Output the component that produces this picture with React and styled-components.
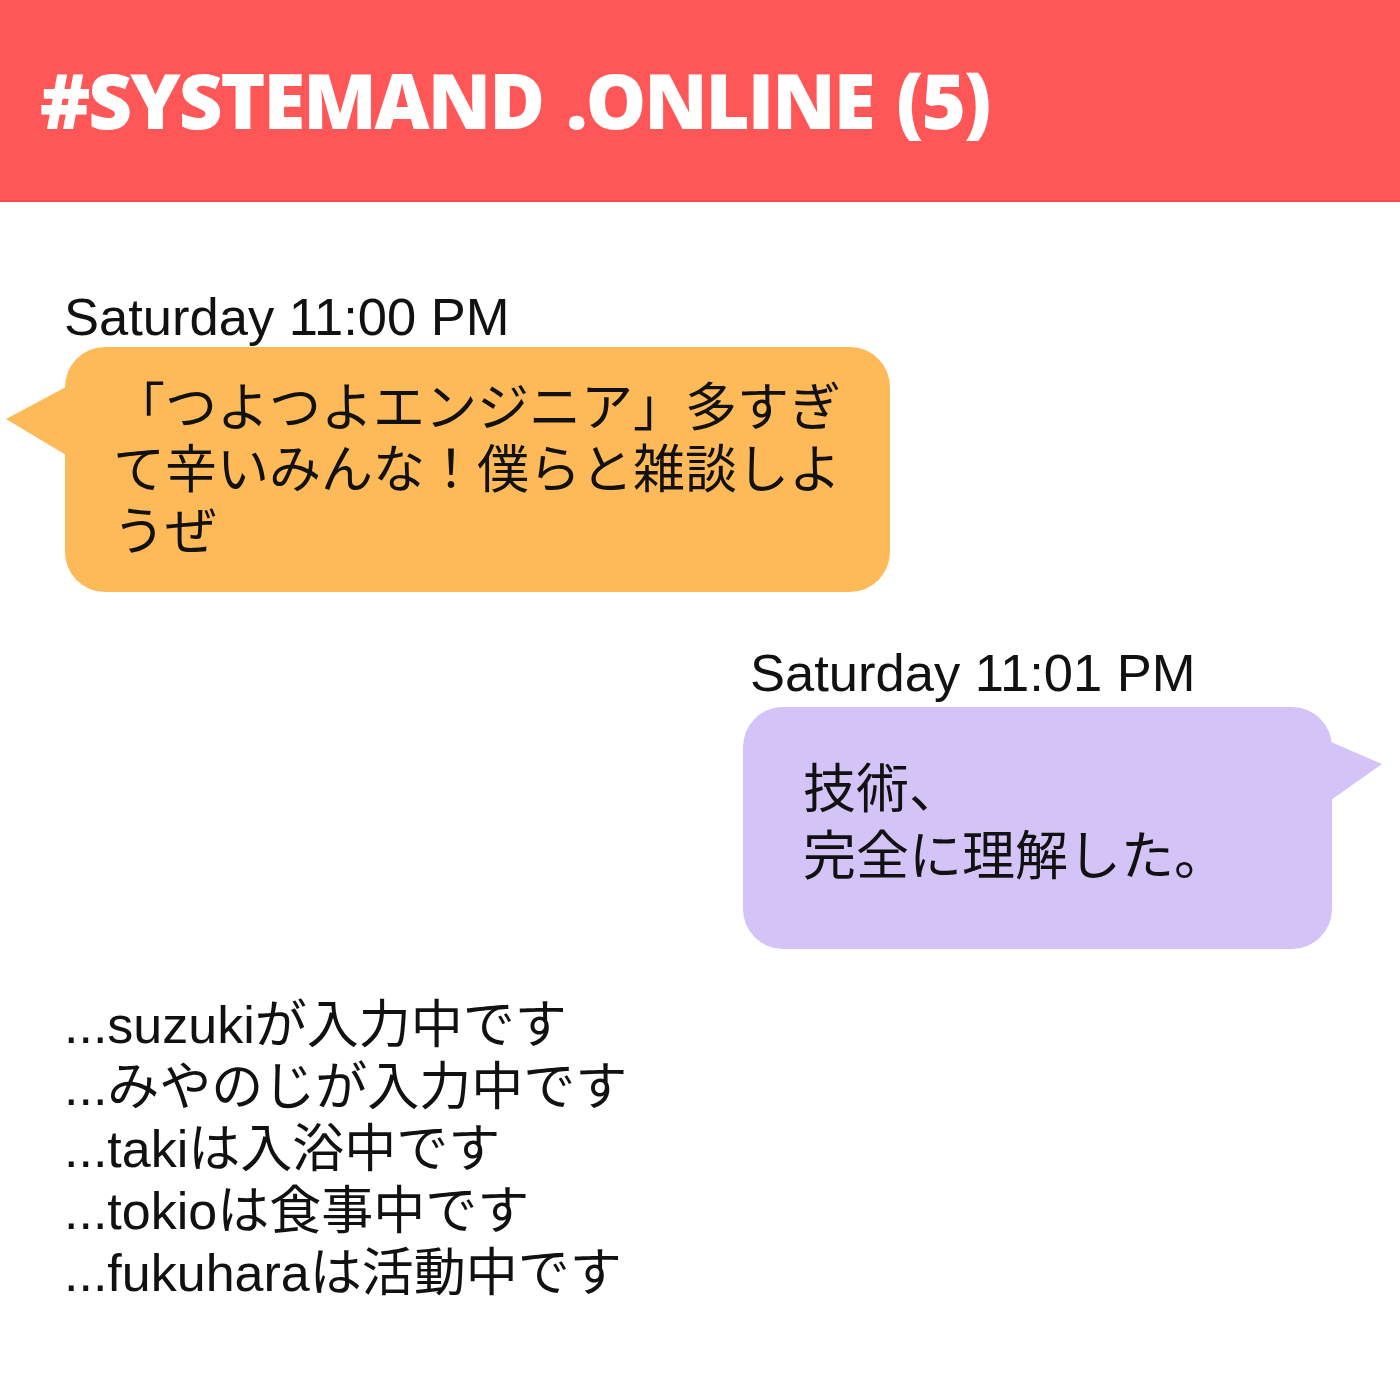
import React from "react";
import styled, { createGlobalStyle } from "styled-components";

const GlobalStyle = createGlobalStyle`
  html, body { margin: 0; padding: 0; background: #ffffff; }
  body { font-family: "Liberation Sans", "Noto Sans CJK JP", sans-serif; }
`;

const Page = styled.div`
  width: 1400px;
  min-height: 1400px;
  background: #ffffff;
  display: flex;
  flex-direction: column;
`;

const Header = styled.header`
  height: 200px;
  background: #ff5757;
  border-bottom: 2px solid #f84a4a;
  display: flex;
  align-items: center;
  padding-left: 40px;
`;

const Title = styled.h1`
  margin: 0;
  font-family: "Open Sans", "Liberation Sans", sans-serif;
  font-weight: 800;
  font-size: 76px;
  line-height: 1;
  color: #ffffff;
  letter-spacing: -2px;
  word-spacing: 5px;
  white-space: nowrap;
`;

const Chat = styled.main`
  display: flex;
  flex-direction: column;
  padding: 89px 68px 0 64px;
`;

const Message = styled.section`
  display: flex;
  flex-direction: column;
  align-self: ${(p) => (p.$mine ? "flex-end" : "flex-start")};
  margin-top: ${(p) => p.$top}px;
`;

const Stamp = styled.div`
  font-family: "Liberation Sans", Arial, sans-serif;
  font-size: 52.5px;
  line-height: 52px;
  color: #111111;
  margin-left: ${(p) => p.$indent}px;
  white-space: nowrap;
`;

const Bubble = styled.div`
  position: relative;
  box-sizing: border-box;
  width: ${(p) => p.$w}px;
  height: ${(p) => p.$h}px;
  margin-top: ${(p) => p.$gap}px;
  margin-left: ${(p) => p.$shift}px;
  padding: ${(p) => p.$pad};
  background: ${(p) => p.$bg};
  border-radius: 40px;
  font-family: "Noto Sans CJK JP", "Liberation Sans", sans-serif;
  font-size: ${(p) => p.$fs}px;
  line-height: ${(p) => p.$lh}px;
  color: #111111;
  white-space: nowrap;

  &::before {
    content: "";
    position: absolute;
    top: ${(p) => p.$tailTop}px;
    width: ${(p) => p.$tailW}px;
    height: ${(p) => p.$tailH}px;
    background: ${(p) => p.$bg};
    ${(p) =>
      p.$mine
        ? `left: calc(100% - 1px); clip-path: polygon(0 0, 100% 38%, 0 100%);`
        : `right: calc(100% - 1px); clip-path: polygon(100% 0, 0 47%, 100% 100%);`}
  }
`;

const Line = styled.span`
  display: block;
  height: ${(p) => p.$lh}px;
`;

const Typing = styled.ul`
  list-style: none;
  margin: 45px 0 0 0;
  padding: 0;
  font-family: "Liberation Sans", "Noto Sans CJK JP", sans-serif;
  font-size: 52px;
  line-height: 62px;
  color: #111111;
`;

const TypingRow = styled.li`
  white-space: nowrap;
  height: 62px;
`;

const typing = [
  "...suzukiが入力中です",
  "...みやのじが入力中です",
  "...takiは入浴中です",
  "...tokioは食事中です",
  "...fukuharaは活動中です",
];

export default function App() {
  return (
    <Page>
      <GlobalStyle />
      <Header>
        <Title>#SYSTEMAND .ONLINE (5)</Title>
      </Header>
      <Chat>
        <Message $top={0}>
          <Stamp $indent={0}>Saturday 11:00 PM</Stamp>
          <Bubble
            $w={825}
            $h={245}
            $gap={4}
            $shift={1}
            $pad="26px 48px 0 48px"
            $bg="#feba58"
            $fs={52}
            $lh={62}
            $tailTop={40}
            $tailW={60}
            $tailH={68}
          >
            <Line $lh={62}>「つよつよエンジニア」多すぎ</Line>
            <Line $lh={62}>て辛いみんな！僕らと雑談しよ</Line>
            <Line $lh={62}>うぜ</Line>
          </Bubble>
        </Message>
        <Message $mine $top={55}>
          <Stamp $indent={7}>Saturday 11:01 PM</Stamp>
          <Bubble
            $mine
            $w={589}
            $h={242}
            $gap={8}
            $shift={0}
            $pad="45px 40px 0 60px"
            $bg="#d4c3f6"
            $fs={53}
            $lh={67}
            $tailTop={35}
            $tailW={51}
            $tailH={58}
          >
            <Line $lh={67}>技術、</Line>
            <Line $lh={67}>完全に理解した。</Line>
          </Bubble>
        </Message>
        <Typing>
          {typing.map((t) => (
            <TypingRow key={t}>{t}</TypingRow>
          ))}
        </Typing>
      </Chat>
    </Page>
  );
}
